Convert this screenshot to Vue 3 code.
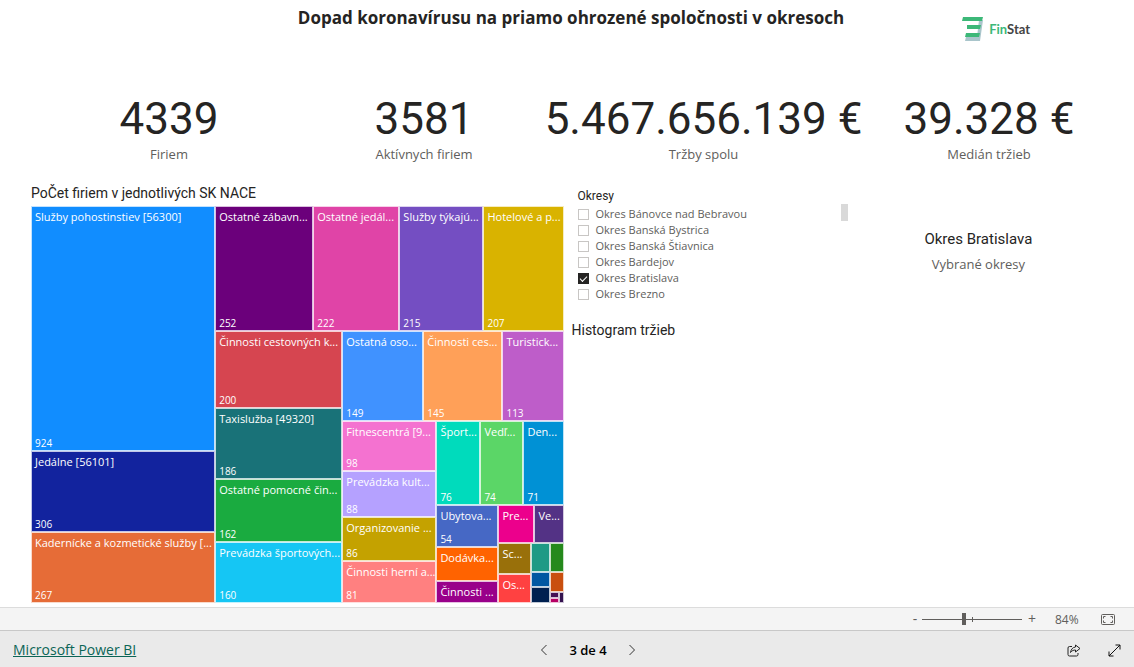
<script setup>
import { ref } from 'vue'

const kpis = [
  { value: '4339', label: 'Firiem' },
  { value: '3581', label: 'Aktívnych firiem' },
  { value: '5.467.656.139 €', label: 'Tržby spolu' },
  { value: '39.328 €', label: 'Medián tržieb' },
]

// Treemap nodes: x0, x1, y0, y1 in chart units, colour, label, count
const nodes = [
  [0, 184, 0, 245, '#118dff', 'Služby pohostinstiev [56300]', 924],
  [0, 184, 245, 326, '#12239e', 'Jedálne [56101]', 306],
  [0, 184, 326, 397, '#e66c37', 'Kadernícke a kozmetické služby [...', 267],
  [184, 282, 0, 125, '#6b007b', 'Ostatné zábavn...', 252],
  [282, 368, 0, 125, '#e044a7', 'Ostatné jedál...', 222],
  [368, 452, 0, 125, '#744ec2', 'Služby týkajú...', 215],
  [452, 533, 0, 125, '#d9b300', 'Hotelové a p...', 207],
  [184, 311, 125, 202, '#d64550', 'Činnosti cestovných k...', 200],
  [184, 311, 202, 273, '#197278', 'Taxislužba [49320]', 186],
  [184, 311, 273, 336, '#1aab40', 'Ostatné pomocné čin...', 162],
  [184, 311, 336, 397, '#15c6f4', 'Prevádzka športových...', 160],
  [311, 392, 125, 215, '#4092ff', 'Ostatná oso...', 149],
  [392, 471, 125, 215, '#ffa058', 'Činnosti ces...', 145],
  [471, 533, 125, 215, '#be5dc9', 'Turistick...', 113],
  [311, 405, 215, 265, '#f472d0', 'Fitnescentrá [9...', 98],
  [311, 405, 265, 311, '#b5a1ff', 'Prevádzka kult...', 88],
  [311, 405, 311, 355, '#c4a200', 'Organizovanie ...', 86],
  [311, 405, 355, 397, '#ff8080', 'Činnosti herní a...', 81],
  [405, 449, 215, 299, '#00dbbc', 'Šport...', 76],
  [449, 492, 215, 299, '#5bd667', 'Vedľ...', 74],
  [492, 533, 215, 299, '#0091d5', 'Den...', 71],
  [405, 467, 299, 341, '#4668c5', 'Ubytova...', 54],
  [405, 467, 341, 375, '#ff6300', 'Dodávka...'],
  [405, 467, 375, 397, '#99008a', 'Činnosti ...'],
  [467, 503, 299, 337, '#ec008c', 'Pre...'],
  [503, 533, 299, 337, '#533285', 'Ve...'],
  [467, 500, 337, 368, '#99700a', 'Sc...'],
  [467, 500, 368, 397, '#ff4141', 'Os...'],
  [500, 519, 337, 366, '#1f9a85'],
  [519, 533, 337, 366, '#25891c'],
  [500, 519, 366, 381, '#0057a2'],
  [500, 519, 381, 397, '#002050'],
  [519, 533, 366, 386, '#c94f0f'],
  [519, 528, 386, 392, '#450f54'],
  [519, 528, 392, 397, '#b60064'],
  [528, 533, 386, 397, '#34124f'],
]
const lines = (a, b) => [...new Set(nodes.flatMap((n) => [n[a], n[b]]))].sort((p, q) => p - q)
const xs = lines(0, 1)
const ys = lines(2, 3)
const tracks = (l) => l.slice(1).map((v, i) => `minmax(0, ${v - l[i]}fr)`).join(' ')
const chartStyle = { gridTemplateColumns: tracks(xs), gridTemplateRows: tracks(ys) }
const tiles = nodes.map(([x0, x1, y0, y1, color, label, count]) => ({
  label,
  count,
  style: {
    gridColumn: `${xs.indexOf(x0) + 1} / ${xs.indexOf(x1) + 1}`,
    gridRow: `${ys.indexOf(y0) + 1} / ${ys.indexOf(y1) + 1}`,
    backgroundColor: color,
  },
}))

const districts = ref([
  { name: 'Okres Bánovce nad Bebravou', on: false },
  { name: 'Okres Banská Bystrica', on: false },
  { name: 'Okres Banská Štiavnica', on: false },
  { name: 'Okres Bardejov', on: false },
  { name: 'Okres Bratislava', on: true },
  { name: 'Okres Brezno', on: false },
])
const zoom = ref(42)
</script>

<template>
  <div class="page">
    <header class="head">
      <h1>Dopad koronavírusu na priamo ohrozené spoločnosti v okresoch</h1>
      <div class="logo">
        <svg width="22" height="26" viewBox="0 0 22 26" aria-hidden="true">
          <path d="M17 4h4l-3 21H3l1-4h11z" fill="#a9c5cb" />
          <path d="M1 1h20l-1 4H0zM5 9h14l-1 4H5zM4 17h14l-1 4H3z" fill="#3cb878" />
        </svg>
        <span><b>Fin</b>Stat</span>
      </div>
    </header>

    <section class="kpis">
      <div v-for="k in kpis" :key="k.label" class="kpi">
        <div class="kpi-value">{{ k.value }}</div>
        <div class="kpi-label">{{ k.label }}</div>
      </div>
    </section>

    <main class="main">
      <section class="chart">
        <h2>PoČet firiem v jednotlivých SK NACE</h2>
        <div class="treemap" :style="chartStyle">
          <div v-for="(t, i) in tiles" :key="i" class="tile" :style="t.style">
            <span v-if="t.label" class="tile-label">{{ t.label }}</span>
            <span v-if="t.count" class="tile-count">{{ t.count }}</span>
          </div>
        </div>
      </section>

      <section class="filters">
        <div class="slicer">
          <h3>Okresy</h3>
          <div class="slicer-body">
            <div class="options">
              <label v-for="d in districts" :key="d.name">
                <input v-model="d.on" type="checkbox" />{{ d.name }}
              </label>
            </div>
            <div class="scroll-thumb"></div>
          </div>
        </div>
        <h2>Histogram tržieb</h2>
      </section>

      <section class="selected">
        <div class="selected-name">Okres Bratislava</div>
        <div class="kpi-label">Vybrané okresy</div>
      </section>
    </main>

    <div class="status">
      <button type="button" aria-label="Oddialiť">-</button>
      <input v-model="zoom" class="zoom" type="range" min="0" max="100" aria-label="Priblíženie" />
      <button type="button" aria-label="Priblížiť">+</button>
      <span class="percent">84%</span>
      <button type="button" class="fit" aria-label="Prispôsobiť">
        <svg width="14" height="11" viewBox="0 0 14 11" fill="none" stroke="#605e5c">
          <rect x=".5" y=".5" width="13" height="10" rx="1" />
          <path d="M2.500 4.500V2.500H4.500M9.500 2.500h2v2M2.500 6.500v2h2M9.500 8.500h2v-2" />
        </svg>
      </button>
    </div>

    <footer class="foot">
      <div><a href="#">Microsoft Power BI</a></div>
      <nav class="pager">
        <button type="button" aria-label="Predchádzajúca">
          <svg width="8" height="12" viewBox="0 0 8 12" fill="none" stroke="#333"><path d="M6.500 1L1.500 6l5 5" /></svg>
        </button>
        <span>3 de 4</span>
        <button type="button" aria-label="Ďalšia">
          <svg width="8" height="12" viewBox="0 0 8 12" fill="none" stroke="#333"><path d="M1.500 1l5 5-5 5" /></svg>
        </button>
      </nav>
      <div class="actions">
        <button type="button" aria-label="Zdieľať">
          <svg width="14" height="13" viewBox="0 0 14 13" fill="none" stroke="#222" stroke-linejoin="round">
            <path d="M5 2.500H2.500a1.500 1.500 0 0 0-1.500 1.500v6.500A1.500 1.500 0 0 0 2.500 12h7a1.500 1.500 0 0 0 1.500-1.500V9" />
            <path d="M8.500 1l4.500 3.500L8.500 8V6C6.500 6 5 6.500 3.500 8.500 4 5.500 5.500 3.300 8.500 3z" />
          </svg>
        </button>
        <button type="button" aria-label="Celá obrazovka">
          <svg width="13" height="13" viewBox="0 0 13 13" fill="none" stroke="#111">
            <path d="M1 12L12 1M7.500 1H12v4.500M1 7.500V12h4.500" />
          </svg>
        </button>
      </div>
    </footer>
  </div>
</template>

<style>
body {
  margin: 0;
}
</style>

<style scoped>
.page {
  display: flex;
  flex-direction: column;
  min-height: 100vh;
  background: #fff;
  color: #252423;
  font-family: "Open Sans", "Noto Sans", sans-serif;
}
h1, h2, h3 {
  margin: 0;
}
h2, h3, .kpi-value, .selected-name {
  font-family: Roboto, sans-serif;
  font-weight: 400;
}
button {
  display: flex;
  align-items: center;
  justify-content: center;
  padding: 0;
  border: 0;
  background: none;
  color: #605e5c;
  font: inherit;
}
.head {
  display: grid;
  grid-template-columns: 1fr auto 1fr;
  padding-left: 8px;
}
h1 {
  grid-column: 2;
  padding-top: 6px;
  font-size: 17px;
  line-height: 24px;
  font-weight: 700;
  white-space: nowrap;
}
.logo {
  display: flex;
  align-items: center;
  gap: 5px;
  margin-left: 118px;
  padding-top: 16px;
  font-family: Lato, sans-serif;
  font-size: 13px;
  line-height: 26px;
  font-weight: 700;
  color: #444;
}
.logo b {
  font-weight: 700;
  color: #3cb878;
}
.kpis {
  display: grid;
  grid-template-columns: 338fr 172fr 387fr 184fr 53fr;
  padding-top: 51px;
}
.kpi {
  display: flex;
  flex-direction: column;
  align-items: center;
  white-space: nowrap;
}
.kpi-value {
  font-size: 44px;
  line-height: 52px;
}
.kpi-label {
  font-size: 13px;
  line-height: 18px;
  color: #605e5c;
}
.main {
  flex: 1;
  display: grid;
  grid-template-columns: 533fr 292fr 233fr;
  column-gap: 7px;
  padding: 20px 30px 4px 31px;
}
.chart {
  display: flex;
  flex-direction: column;
}
h2 {
  font-size: 14px;
  line-height: 20px;
}
.chart h2 {
  padding-bottom: 3px;
}
.treemap {
  flex: 1;
  display: grid;
  min-height: 396px;
}
.tile {
  display: flex;
  flex-direction: column;
  justify-content: space-between;
  overflow: hidden;
  border: 1px solid rgba(255, 255, 255, 0.75);
  color: #fff;
  white-space: nowrap;
}
.tile-label {
  padding: 2px 0 0 3px;
  font-size: 11px;
  line-height: 16px;
}
.tile-count {
  padding-left: 3px;
  font-size: 10px;
  line-height: 13px;
}
.slicer {
  padding: 5px 0 0 6px;
}
h3 {
  font-size: 12px;
  line-height: 16px;
}
.slicer-body {
  display: flex;
  justify-content: space-between;
  padding-right: 16px;
}
.options {
  display: flex;
  flex-direction: column;
  padding-top: 2px;
}
.options label {
  display: flex;
  align-items: center;
  gap: 7px;
  font-size: 11px;
  line-height: 16px;
  color: #605e5c;
}
.options input {
  appearance: none;
  display: grid;
  place-items: center;
  width: 11px;
  height: 11px;
  margin: 0;
  border: 1px solid #c8c6c4;
}
.options input:checked {
  border-color: #252423;
  background: #252423;
}
.options input:checked::after {
  content: "";
  width: 6px;
  height: 3px;
  border-left: 1px solid #fff;
  border-bottom: 1px solid #fff;
  transform: rotate(-45deg);
}
.scroll-thumb {
  width: 7px;
  height: 17px;
  background: #d9d9d9;
}
.filters h2 {
  padding-top: 18px;
}
.selected {
  padding: 46px 18px 0 0;
  text-align: center;
}
.selected-name {
  font-size: 15px;
  line-height: 20px;
}
.selected .kpi-label {
  padding-top: 6px;
}
.status {
  display: flex;
  align-items: center;
  justify-content: flex-end;
  height: 22px;
  padding-right: 19px;
  border-top: 1px solid #dcdcdc;
  background: #f4f4f4;
  color: #605e5c;
  font-size: 12px;
}
.status button {
  width: 14px;
  font-size: 14px;
  line-height: 20px;
}
.zoom {
  appearance: none;
  width: 100px;
  height: 12px;
  margin: 0 3px 0 0;
  background:
    linear-gradient(#605e5c, #605e5c) 50px 50% / 1px 5px no-repeat,
    linear-gradient(#605e5c, #605e5c) 0 50% / 100% 1px no-repeat;
}
.zoom::-webkit-slider-thumb {
  appearance: none;
  width: 4px;
  height: 12px;
  background: #605e5c;
}
.percent {
  width: 24px;
  margin: 0 22px 0 16px;
}
.foot {
  display: grid;
  grid-template-columns: 1fr auto 1fr;
  align-items: center;
  height: 37px;
  padding: 2px 13px 0;
  box-sizing: border-box;
  border-top: 1px solid #c8c8c8;
  background: #eaeaea;
  font-size: 14px;
  line-height: 20px;
}
.foot a {
  color: #0b6556;
}
.pager {
  display: flex;
  align-items: center;
  gap: 21px;
  padding-left: 42px;
  color: #000;
  font-size: 13px;
  font-weight: 600;
}
.actions {
  display: flex;
  justify-content: flex-end;
  gap: 27px;
}
</style>
